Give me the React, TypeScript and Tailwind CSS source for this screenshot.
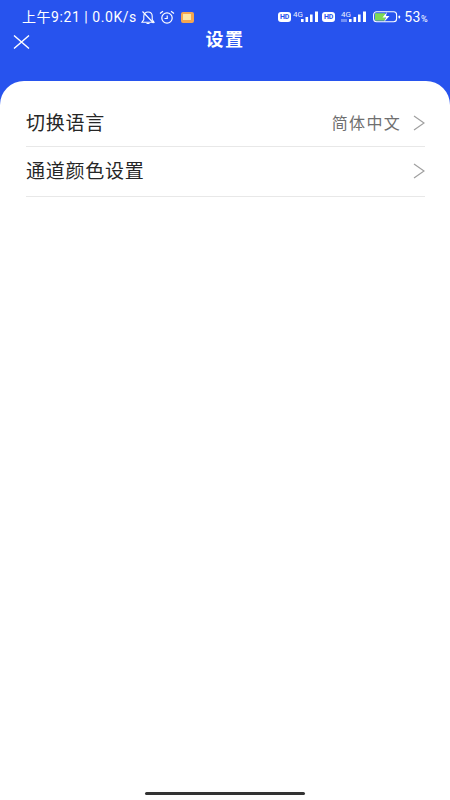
import React from "react";

const cjk = "font-['Roboto','Noto_Sans_CJK_SC',sans-serif]";

function Signal({ tag }: { tag?: boolean }) {
  return (
    <svg width="26" height="14" viewBox="0 0 26 14" fill="none" className="shrink-0">
      <text x="0" y="6.5" fontSize="8" fill="#fff" fontFamily="Roboto, sans-serif" opacity="0.9">4G</text>
      {tag && <rect x="0" y="9" width="6" height="3" fill="#fff" opacity="0.35" />}
      <rect x="8" y="9" width="2.6" height="3" fill="#fff" />
      <rect x="12.5" y="7" width="2.6" height="5" fill="#fff" />
      <rect x="17" y="4.5" width="2.6" height="7.5" fill="#fff" />
      <rect x="22" y="1.5" width="3" height="10.5" fill="#fff" />
    </svg>
  );
}

function HD() {
  return (
    <span className="flex h-[10px] w-[13px] shrink-0 items-center justify-center rounded-[3px] bg-white font-['Roboto',sans-serif] text-[7px] leading-none font-bold text-[#2753ee]">
      HD
    </span>
  );
}

function Chevron() {
  return (
    <svg width="12" height="16" viewBox="0 0 12 16" fill="none" className="mb-[2px] shrink-0">
      <path d="M1 1L11 8L1 15" stroke="#a0a0a0" strokeWidth="1.2" />
    </svg>
  );
}

export default function App() {
  return (
    <div className={`flex min-h-[800px] w-[450px] flex-col bg-[#2753ee] ${cjk}`}>
      <div className="flex h-[34px] items-center pl-[22px] pr-[22px] text-white">
        <span className="text-[14px] leading-none tracking-[0.55px] whitespace-nowrap">上午9:21 | 0.0K/s</span>
        <svg width="16" height="15" viewBox="0 0 16 15" fill="none" className="ml-[3px] shrink-0">
          <path d="M2 12.2H14L12.2 9.5V6.2C12.2 3.8 10.4 2 8 2C5.6 2 3.8 3.8 3.8 6.2V9.5L2 12.2Z" stroke="#fff" strokeWidth="1.1" />
          <path d="M6.5 13.5H9.5M2.5 1.5L13.5 13" stroke="#fff" strokeWidth="1.1" />
        </svg>
        <svg width="16" height="15" viewBox="0 0 16 15" fill="none" className="ml-[3px] shrink-0">
          <circle cx="8" cy="8" r="5.2" stroke="#fff" strokeWidth="1.2" />
          <path d="M5.5 8.5H8.2V5.5M1 3.5L4 1.2M15 3.5L12 1.2" stroke="#fff" strokeWidth="1.2" />
        </svg>
        <span className="ml-[6px] flex h-[11px] w-[13px] shrink-0 items-center justify-center rounded-[2px] bg-[#f5a650]">
          <span className="h-[6px] w-[8px] bg-[#fde6a6]" />
        </span>
        <div className="ml-auto flex items-center">
          <HD />
          <span className="ml-[2px]"><Signal /></span>
          <span className="ml-[3px]"><HD /></span>
          <span className="ml-[6px]"><Signal tag /></span>
          <svg width="28" height="12" viewBox="0 0 28 12" fill="none" className="ml-[6px] shrink-0">
            <rect x="0.6" y="0.8" width="23" height="10" rx="3" stroke="#fff" strokeWidth="1.1" />
            <path d="M2 2.2H12V9.6H2Z" fill="#7ed957" />
            <path d="M14 1L9.5 6.5H13L11 11L16.5 5H13Z" fill="#fff" />
            <rect x="25.5" y="4.5" width="1.6" height="3" rx="0.8" fill="#fff" />
          </svg>
          <span className="ml-[3px] text-[14px] leading-none tracking-[0.5px]">53<span className="text-[9px]">%</span></span>
        </div>
      </div>
      <div className="flex h-[47px] items-start">
        <div className="flex w-[42px] justify-center">
          <svg width="17" height="14" viewBox="0 0 17 14" fill="none" className="mt-[1px]">
            <path d="M1 0.5L16 13.5M16 0.5L1 13.5" stroke="#fff" strokeWidth="1.4" />
          </svg>
        </div>
        <div className="flex-1 pr-[42px] text-center text-[18px] leading-[11px] font-bold tracking-[1.5px] text-white">设置</div>
      </div>
      <div className="flex flex-1 flex-col rounded-t-[24px] bg-white">
        <div className="flex-1 pl-[26px] pr-[25px] pt-[19px]">
          <div className="flex h-[47px] items-center border-b border-[#e8e8e8] pt-[2px]">
            <span className="text-[19px] tracking-[0.75px] text-[#262626]">切换语言</span>
            <span className="ml-auto text-[16px] tracking-[1.3px] text-[#6f6f6f]">简体中文</span>
            <span className="ml-[12px]"><Chevron /></span>
          </div>
          <div className="flex h-[50px] items-center border-b border-[#e8e8e8]">
            <span className="mt-[2px] text-[19px] tracking-[0.75px] text-[#262626]">通道颜色设置</span>
            <span className="ml-auto"><Chevron /></span>
          </div>
        </div>
        <div className="flex h-[16px] justify-center pt-[8px]">
          <div className="h-[3px] w-[160px] rounded-full bg-[#333333]" />
        </div>
      </div>
    </div>
  );
}
